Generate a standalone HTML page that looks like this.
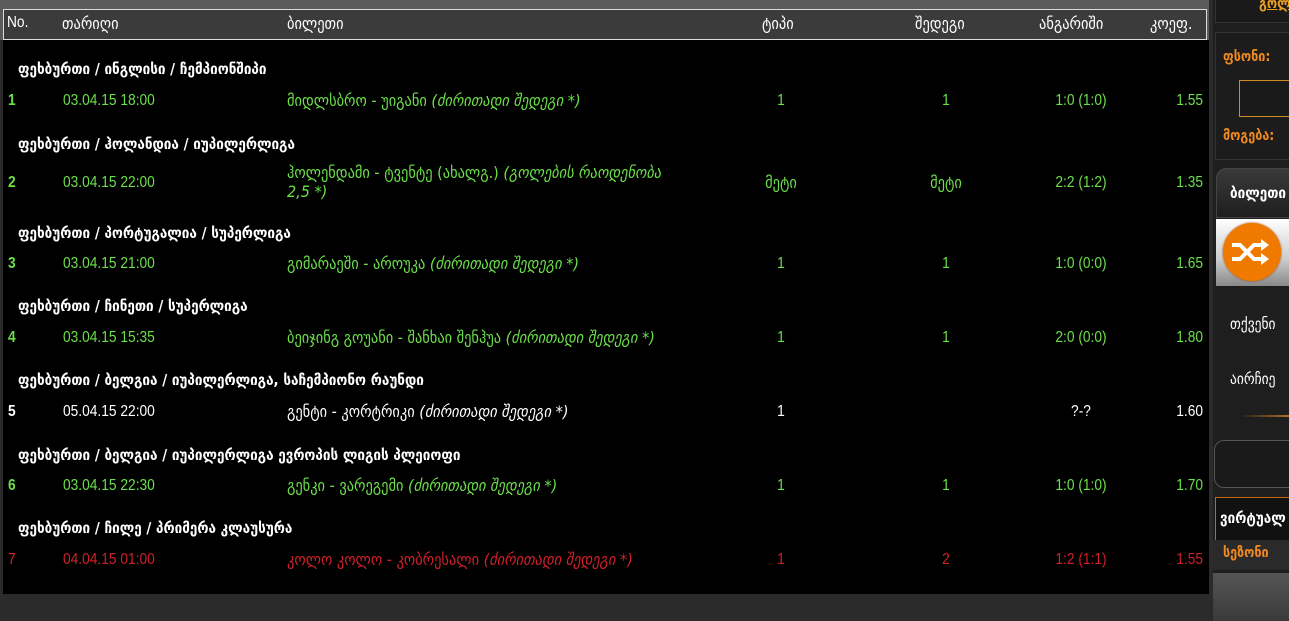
<!DOCTYPE html>
<html><head><meta charset="utf-8"><style>
body{margin:0;width:1289px;height:621px;overflow:hidden;background:#2b2b2b;font-family:"DejaVu Sans Condensed","DejaVu Sans",sans-serif;position:relative}
.a{position:absolute;white-space:nowrap}
#top{left:0;top:0;width:1209px;height:40px;background:#5a5a5a}
#hdr{left:3px;top:9px;width:1202px;height:29px;background:#3b3b3b;border:1px solid #ddd}
#hdr span{position:absolute;top:4px;color:#fff;font-size:16px}
#panel{left:3px;top:40px;width:1206px;height:554px;background:#000}
.c{color:#fff;font-size:15px;font-weight:bold;left:18px}
.r{font-size:16px}
.n{font-family:"Liberation Sans",sans-serif;font-size:16px;transform:scaleX(.86);transform-origin:left}
.g{color:#6be04a}.w{color:#fff}.rd{color:#d0202a}
i{font-style:italic}
.ctr{transform:translateX(-50%) scaleX(.86);transform-origin:center}
.rt{transform:translateX(-100%) scaleX(.86);transform-origin:right}
#side{left:1213px;top:0;width:76px;height:621px;background:#1e1e1e}
</style></head><body>
<div class="a" id="top"></div>
<div class="a" id="panel"></div>
<div class="a" id="hdr">
<span style="left:3px;font-family:'Liberation Sans';transform:scaleX(.86);transform-origin:left">No.</span><span style="left:58px">თარიღი</span><span style="left:283px">ბილეთი</span>
<span style="left:758px">ტიპი</span><span style="left:911px">შედეგი</span><span style="left:1035px">ანგარიში</span><span style="left:1146px">კოეფ.</span>
</div>

<div class="a c" style="top:60px">ფეხბურთი / ინგლისი / ჩემპიონშიპი</div>
<div class="a c" style="top:135px">ფეხბურთი / ჰოლანდია / იუპილერლიგა</div>
<div class="a c" style="top:224px">ფეხბურთი / პორტუგალია / სუპერლიგა</div>
<div class="a c" style="top:297px">ფეხბურთი / ჩინეთი / სუპერლიგა</div>
<div class="a c" style="top:371px">ფეხბურთი / ბელგია / იუპილერლიგა, საჩემპიონო რაუნდი</div>
<div class="a c" style="top:446px">ფეხბურთი / ბელგია / იუპილერლიგა ევროპის ლიგის პლეიოფი</div>
<div class="a c" style="top:519px">ფეხბურთი / ჩილე / პრიმერა კლაუსურა</div>

<!-- row 1 -->
<div class="a n g" style="top:92px;left:8px;font-weight:bold">1</div>
<div class="a n g" style="top:92px;left:63px">03.04.15 18:00</div>
<div class="a r g" style="top:91px;left:287px">მიდლსბრო - უიგანი <i>(ძირითადი შედეგი *)</i></div>
<div class="a n g ctr" style="top:92px;left:781px">1</div>
<div class="a n g ctr" style="top:92px;left:946px">1</div>
<div class="a n g ctr" style="top:92px;left:1081px">1:0 (1:0)</div>
<div class="a n g rt" style="top:92px;left:1203px">1.55</div>
<!-- row 2 -->
<div class="a n g" style="top:174px;left:8px;font-weight:bold">2</div>
<div class="a n g" style="top:174px;left:63px">03.04.15 22:00</div>
<div class="a r g" style="top:163px;left:287px;line-height:19px">ჰოლენდამი - ტვენტე (ახალგ.) <i>(გოლების რაოდენობა</i><br><i>2,5 *)</i></div>
<div class="a r g" style="top:173px;left:781px;transform:translateX(-50%)">მეტი</div>
<div class="a r g" style="top:173px;left:946px;transform:translateX(-50%)">მეტი</div>
<div class="a n g ctr" style="top:174px;left:1081px">2:2 (1:2)</div>
<div class="a n g rt" style="top:174px;left:1203px">1.35</div>
<!-- row 3 -->
<div class="a n g" style="top:255px;left:8px;font-weight:bold">3</div>
<div class="a n g" style="top:255px;left:63px">03.04.15 21:00</div>
<div class="a r g" style="top:254px;left:287px">გიმარაეში - აროუკა <i>(ძირითადი შედეგი *)</i></div>
<div class="a n g ctr" style="top:255px;left:781px">1</div>
<div class="a n g ctr" style="top:255px;left:946px">1</div>
<div class="a n g ctr" style="top:255px;left:1081px">1:0 (0:0)</div>
<div class="a n g rt" style="top:255px;left:1203px">1.65</div>
<!-- row 4 -->
<div class="a n g" style="top:329px;left:8px;font-weight:bold">4</div>
<div class="a n g" style="top:329px;left:63px">03.04.15 15:35</div>
<div class="a r g" style="top:328px;left:287px">ბეიჯინგ გოუანი - შანხაი შენჰუა <i>(ძირითადი შედეგი *)</i></div>
<div class="a n g ctr" style="top:329px;left:781px">1</div>
<div class="a n g ctr" style="top:329px;left:946px">1</div>
<div class="a n g ctr" style="top:329px;left:1081px">2:0 (0:0)</div>
<div class="a n g rt" style="top:329px;left:1203px">1.80</div>
<!-- row 5 -->
<div class="a n w" style="top:403px;left:8px;font-weight:bold">5</div>
<div class="a n w" style="top:403px;left:63px">05.04.15 22:00</div>
<div class="a r w" style="top:402px;left:287px">გენტი - კორტრიკი <i>(ძირითადი შედეგი *)</i></div>
<div class="a n w ctr" style="top:403px;left:781px">1</div>
<div class="a n w ctr" style="top:403px;left:1081px">?-?</div>
<div class="a n w rt" style="top:403px;left:1203px">1.60</div>
<!-- row 6 -->
<div class="a n g" style="top:477px;left:8px;font-weight:bold">6</div>
<div class="a n g" style="top:477px;left:63px">03.04.15 22:30</div>
<div class="a r g" style="top:476px;left:287px">გენკი - ვარეგემი <i>(ძირითადი შედეგი *)</i></div>
<div class="a n g ctr" style="top:477px;left:781px">1</div>
<div class="a n g ctr" style="top:477px;left:946px">1</div>
<div class="a n g ctr" style="top:477px;left:1081px">1:0 (1:0)</div>
<div class="a n g rt" style="top:477px;left:1203px">1.70</div>
<!-- row 7 -->
<div class="a n rd" style="top:551px;left:8px">7</div>
<div class="a n rd" style="top:551px;left:63px">04.04.15 01:00</div>
<div class="a r rd" style="top:550px;left:287px">კოლო კოლო - კობრესალი <i>(ძირითადი შედეგი *)</i></div>
<div class="a n rd ctr" style="top:551px;left:781px">1</div>
<div class="a n rd ctr" style="top:551px;left:946px">2</div>
<div class="a n rd ctr" style="top:551px;left:1081px">1:2 (1:1)</div>
<div class="a n rd rt" style="top:551px;left:1203px">1.55</div>

<!-- sidebar -->
<div class="a" id="side"></div>
<div class="a" style="left:1215px;top:0;width:74px;height:22px;border:1px solid #333;border-top:none;background:#1a1a1a"></div>
<div class="a" style="left:1259px;top:-4px;color:#f0a020;font-size:14px;font-weight:bold;text-decoration:underline">გოლ</div>
<div class="a" style="left:1215px;top:32px;width:74px;height:126px;border:1px solid #333;background:#1c1c1c"></div>
<div class="a" style="left:1223px;top:49px;color:#f08a20;font-size:14px;font-weight:bold">ფსონი:</div>
<div class="a" style="left:1239px;top:80px;width:60px;height:35px;border:1px solid #d08a20;background:#1a1a1a"></div>
<div class="a" style="left:1223px;top:128px;color:#f08a20;font-size:14px;font-weight:bold">მოგება:</div>
<div class="a" style="left:1216px;top:168px;width:80px;height:48px;border-radius:10px 0 0 0;background:linear-gradient(#3a3a3a,#1e1e1e);border:1px solid #444"></div>
<div class="a" style="left:1230px;top:184px;color:#fff;font-size:15px;font-weight:bold">ბილეთი</div>
<div class="a" style="left:1216px;top:219px;width:73px;height:67px;background:linear-gradient(#fff,#ccc 60%,#888)"></div>
<div class="a" style="left:1223px;top:223px;width:58px;height:58px;border-radius:50%;background:#f07a00;box-shadow:0 0 2px #a04000"></div>
<svg class="a" style="left:1230px;top:237px" width="44" height="30" viewBox="0 0 44 30"><path d="M2 8h8l14 14h8M2 22h8l14-14h8" stroke="#fff" stroke-width="4" fill="none"/><path d="M31 2l8 6-8 6zM31 16l8 6-8 6z" fill="#fff"/></svg>
<div class="a" style="left:1230px;top:315px;color:#fff;font-size:15px">თქვენი</div>
<div class="a" style="left:1230px;top:370px;color:#fff;font-size:15px">აირჩიე</div>
<div class="a" style="left:1240px;top:415px;width:49px;height:2px;background:linear-gradient(90deg,#1e1e1e,#b07020)"></div>
<div class="a" style="left:1214px;top:440px;width:80px;height:46px;border:1px solid #555;border-radius:10px 0 0 10px;background:#1a1a1a"></div>
<div class="a" style="left:1215px;top:497px;width:78px;height:42px;border:1px solid #c06a10;background:#111"></div>
<div class="a" style="left:1220px;top:509px;color:#fff;font-size:15px;font-weight:bold">ვირტუალ</div>
<div class="a" style="left:1213px;top:540px;width:76px;height:30px;background:#2a2a2a"></div>
<div class="a" style="left:1223px;top:545px;color:#f08a20;font-size:14px;font-weight:bold">სეზონი</div>
<div class="a" style="left:1213px;top:573px;width:76px;height:48px;background:linear-gradient(#555,#3a3a3a)"></div>
</body></html>
